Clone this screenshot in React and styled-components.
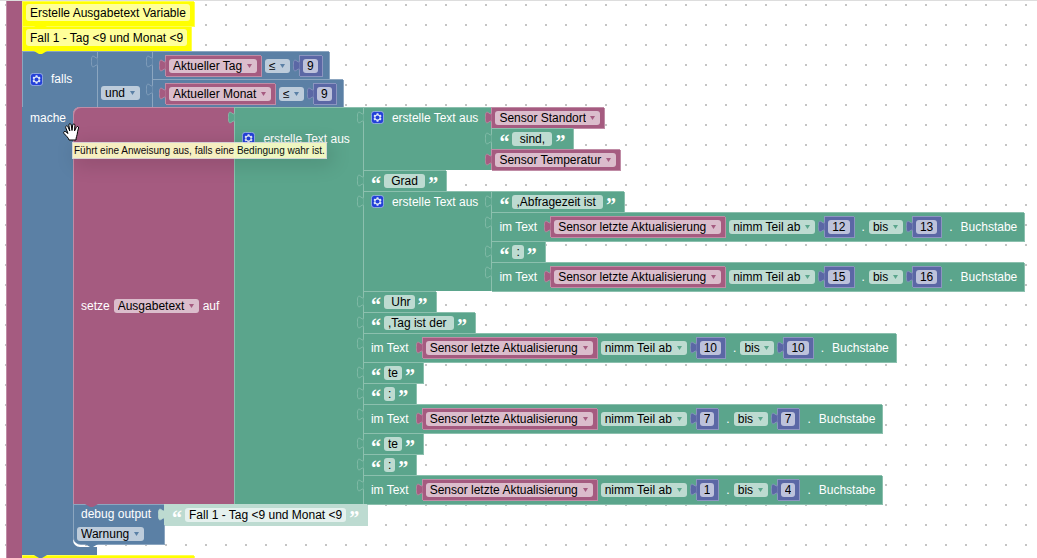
import React from "react";
import styled, { createGlobalStyle, css, ThemeProvider } from "styled-components";

const theme = {
  colors: {
    variable: { fill: "#a55b80", edge: "#c08ca6", field: "#dbbdcc" },
    text: { fill: "#5ba58c", edge: "#8cc0ae", field: "#bddbd1" },
    logic: { fill: "#5b80a5", edge: "#8ca6c0", field: "#bdccdb" },
    math: { fill: "#5b67a5", edge: "#8c95c0", field: "#bdc2db" },
    comment: { fill: "#ffff00", edge: "#ffff4d", field: "#ffff99" },
    shadow: { fill: "#bddbd1", edge: "#bddbd1", field: "#e5f1ee" },
  },
};

const GlobalStyle = createGlobalStyle`
  * {
    box-sizing: border-box;
  }
  body {
    margin: 0;
    background: #fff;
    font: 12px/14px "Liberation Sans", Arial, sans-serif;
  }
  input, select {
    font: inherit;
  }
`;

const tone = (part) => ({ theme, $tone }) => theme.colors[$tone][part];

const edges = css`
  background: ${tone("fill")};
  box-shadow: inset 1px 1px 0 ${tone("edge")}, 1px 1px 0 ${tone("edge")};
`;

const Workspace = styled.main`
  height: 100vh;
  overflow: hidden;
  padding-left: 6px;
  border-top: 1px solid #ddd;
  background-color: #fff;
  background-image: radial-gradient(circle, #c4c4c4 1px, transparent 1px);
  background-size: 20px 20px;
  background-position: -4px -6px;
`;

const Program = styled.div`
  display: flex;
  height: 100%;
`;

const ProgramArm = styled.div`
  flex: none;
  width: 16px;
  background: ${({ theme }) => theme.colors.variable.fill};
  box-shadow: inset 1px 0 0 ${({ theme }) => theme.colors.variable.edge};
`;

const Stack = styled.div`
  display: flex;
  flex-direction: column;
  align-items: flex-start;

  & > * {
    flex-shrink: 0;
  }
`;

const Label = styled.span`
  flex: none;
  margin-left: ${({ $flush }) => ($flush ? 0 : "4px")};
  color: #fff;
  white-space: nowrap;
`;

const TextField = styled.input`
  flex: none;
  field-sizing: content;
  height: 14px;
  padding: 0 4px;
  border: 0;
  border-radius: 3px;
  outline: 0;
  color: #000;
  background: ${tone("field")};
`;

const CommentField = styled(TextField)`
  height: 17px;
`;

const SelectWrap = styled.span`
  position: relative;
  flex: none;
  display: flex;
`;

const Select = styled.select`
  appearance: none;
  height: 14px;
  padding: 0 14px 0 4px;
  border: 0;
  border-radius: 3px;
  outline: 0;
  color: #000;
  background: ${tone("field")};
`;

const Arrow = styled.svg`
  position: absolute;
  top: 5px;
  right: 5px;
  width: 5px;
  height: 4px;
  fill: ${tone("fill")};
  pointer-events: none;
`;

const Quote = styled.span`
  flex: none;
  width: 10px;
  height: 20px;
  color: #fff;
  font: bold 20px/26px "Liberation Serif", serif;
`;

const GearBox = styled.button`
  flex: none;
  display: flex;
  width: 13px;
  height: 13px;
  margin-left: 4px;
  padding: 0;
  border: 0;
  background: none;
`;

const TabShape = styled.svg`
  position: absolute;
  top: 4px;
  left: -6px;
  width: 7px;
  height: 13px;
  fill: ${tone("fill")};
  stroke: ${tone("edge")};
`;

const NotchShape = styled.svg`
  position: absolute;
  z-index: 1;
  top: 100%;
  left: 12px;
  width: 13px;
  height: 3px;
  fill: ${tone("fill")};
`;

/* A block that sits inside the line of another block */
const InlineBlock = styled.div`
  position: relative;
  flex: none;
  display: flex;
  align-items: center;
  height: 21px;
  padding: 0 4px;
  margin-left: 5px;
  ${edges}

  &:first-of-type,
  ${Label} + & {
    margin-left: 9px;
  }
`;

/* A block with one line of fields, plugged into a row of its parent */
const LineBlock = styled.div`
  position: relative;
  display: flex;
  align-items: center;
  align-self: flex-start;
  gap: 4px;
  height: 29px;
  padding: 0 7px 0 4px;
  white-space: nowrap;
  ${edges}
`;

const CompareBlock = styled(LineBlock)`
  align-items: flex-start;
  height: 28px;
  padding-top: 4px;

  & > ${SelectWrap} {
    margin-top: 4px;
  }
`;

const StringBlock = styled(LineBlock)`
  gap: 3px;
  height: 21px;
  padding: 0 8px;
`;

const VariableBlock = styled(LineBlock)`
  height: 21px;
  padding: 0 4px;
`;

const CommentBlock = styled(LineBlock)`
  height: 25px;
  padding: 0 4px 2px;
`;

/* A block whose inputs hang on its right side */
const OuterBlock = styled.div`
  position: relative;
  display: flex;
  align-items: stretch;
`;

const Head = styled.div`
  position: relative;
  flex: none;
  display: flex;
  gap: 4px;
  align-items: ${({ $align }) => $align || "center"};
  padding: 0 13px 0 4px;
  white-space: nowrap;
  background: ${tone("fill")};
  box-shadow: inset 1px 1px 0 ${tone("edge")};
`;

const SetHead = styled(Head)`
  padding-right: 15px;
  border-top-left-radius: 7px;
`;

const FirstRow = styled.div`
  display: flex;
  align-items: center;
  gap: 4px;
  height: ${({ $rows }) => $rows * 21}px;
`;

const AndHead = styled(Head)`
  align-items: flex-end;
  padding: 0 12px 7px 4px;
`;

const IfHead = styled(Head)`
  width: 75px;
`;

const Rows = styled.div`
  display: flex;
  flex-direction: column;
  align-items: flex-start;
`;

const IfBody = styled.div`
  display: flex;
`;

const IfArm = styled.div`
  position: relative;
  flex: none;
  width: 51px;
  padding: 4px 0 0 4px;
  background: ${tone("fill")};
`;

const Slot = styled.div`
  position: relative;
  padding-bottom: 3px;
`;

const SlotCorner = styled.svg`
  position: absolute;
  left: 0;
  width: 7px;
  height: 7px;
  fill: ${tone("fill")};
  ${({ $top }) => ($top ? "top: 0;" : "bottom: 0;")}
`;

const IfFoot = styled.div`
  position: relative;
  width: 75px;
  height: 8px;
  background: ${tone("fill")};
`;

const DebugBlock = styled.div`
  position: relative;
  display: flex;
  align-items: flex-start;
`;

const DebugHead = styled.div`
  position: relative;
  display: flex;
  flex-direction: column;
  width: 91px;
  padding-left: 4px;
  border-bottom-left-radius: 7px;
  ${edges}
`;

const DebugLine = styled.div`
  display: flex;
  align-items: center;
  height: 20px;
`;

const Tooltip = styled.div`
  position: absolute;
  z-index: 3;
  top: 35px;
  left: 50px;
  padding: 1px;
  border: 1px solid #ddd;
  color: #000;
  background: #ffffc7;
  box-shadow: 4px 4px 20px 1px rgba(0, 0, 0, 0.15);
  font-size: 10px;
  line-height: 13px;
  white-space: nowrap;
  opacity: 0.9;
`;

const HandShape = styled.svg`
  position: absolute;
  z-index: 4;
  top: 16px;
  left: 41px;
  width: 17px;
  height: 18px;
`;

const Tab = ({ tone }) => (
  <TabShape $tone={tone} viewBox="0 0 8.5 16" preserveAspectRatio="none" aria-hidden="true">
    <path d="M8 .5c0 10-7.5-8-7.5 7.5S8 5.500 8 15.500" />
  </TabShape>
);

const Notch = ({ tone }) => (
  <NotchShape $tone={tone} viewBox="0 0 13 3" aria-hidden="true">
    <path d="M0 0L5 3H8L13 0Z" />
  </NotchShape>
);

const Dropdown = ({ tone, value, label }) => (
  <SelectWrap>
    <Select $tone={tone} aria-label={label} defaultValue={value}>
      <option>{value}</option>
    </Select>
    <Arrow $tone={tone} viewBox="0 0 5 4" aria-hidden="true">
      <path d="M0 0H5L2.500 4Z" />
    </Arrow>
  </SelectWrap>
);

const Gear = () => (
  <GearBox type="button" aria-label="Block bearbeiten">
    <svg width="13" height="13" viewBox="0 0 16 16" aria-hidden="true">
      <rect x=".5" y=".5" width="15" height="15" rx="3.500" fill="#2340d8" stroke="#a9bde6" />
      <path
        fill="#dfe8f8"
        d="m4.203,7.296 0,1.368 -0.92,0.677 -0.11,0.41 0.9,1.559 0.41,0.11 1.043,-0.457 1.187,0.683 0.127,1.134 0.3,0.3 1.8,0 0.3,-0.299 0.127,-1.138 1.185,-0.682 1.046,0.458 0.409,-0.11 0.9,-1.559 -0.11,-0.41 -0.92,-0.677 0,-1.366 0.92,-0.677 0.11,-0.41 -0.9,-1.559 -0.409,-0.109 -1.046,0.458 -1.185,-0.682 -0.127,-1.138 -0.3,-0.299 -1.8,0 -0.3,0.3 -0.126,1.135 -1.187,0.682 -1.043,-0.457 -0.41,0.11 -0.899,1.559z"
      />
      <circle cx="8" cy="8" r="2.500" fill="#2340d8" />
    </svg>
  </GearBox>
);

const Variable = ({ name, line }) => {
  const Wrapper = line ? VariableBlock : InlineBlock;
  return (
    <Wrapper $tone="variable">
      <Tab tone="variable" />
      <Dropdown tone="variable" value={name} label="Variable" />
    </Wrapper>
  );
};

const NumberValue = ({ value }) => (
  <InlineBlock $tone="math">
    <Tab tone="math" />
    <TextField $tone="math" aria-label="Zahl" defaultValue={value} />
  </InlineBlock>
);

const StringValue = ({ value, tone = "text" }) => (
  <StringBlock $tone={tone}>
    <Tab tone={tone} />
    <Quote>“</Quote>
    <TextField $tone={tone} aria-label="Text" defaultValue={value} />
    <Quote>”</Quote>
  </StringBlock>
);

const Compare = ({ name, value }) => (
  <CompareBlock $tone="logic">
    <Tab tone="logic" />
    <Variable name={name} />
    <Dropdown tone="logic" value="≤" label="Vergleich" />
    <NumberValue value={value} />
  </CompareBlock>
);

const Substring = ({ from, to }) => (
  <LineBlock $tone="text">
    <Tab tone="text" />
    <Label>im Text</Label>
    <Variable name="Sensor letzte Aktualisierung" />
    <Dropdown tone="text" value="nimm Teil ab" label="Von" />
    <NumberValue value={from} />
    <Label>.</Label>
    <Dropdown tone="text" value="bis" label="Bis" />
    <NumberValue value={to} />
    <Label>.</Label>
    <Label>Buchstabe</Label>
  </LineBlock>
);

const JoinText = ({ firstRows, children }) => (
  <OuterBlock>
    <Head $tone="text" $align="flex-start">
      <Tab tone="text" />
      <FirstRow $rows={firstRows}>
        <Gear />
        <Label>erstelle Text aus</Label>
      </FirstRow>
    </Head>
    <Rows>{children}</Rows>
  </OuterBlock>
);

const Comment = ({ value }) => (
  <CommentBlock $tone="comment">
    <CommentField $tone="comment" aria-label="Kommentar" defaultValue={value} />
    <Notch tone="comment" />
  </CommentBlock>
);

const Hand = () => (
  <HandShape viewBox="0 0 17 18" aria-hidden="true">
    <path
      fill="#fff"
      stroke="#000"
      strokeLinejoin="round"
      d="M6 17C5.500 14.500 3 13 .9 10.300 0 9 1.600 7.800 2.900 8.800L5 10.500 2.700 4.500C2.200 2.900 4.200 2.200 4.900 3.700L6.800 8 5.900 2.200C5.700.3 7.800.1 8.200 1.900L9 7.500 9.700 2C10 .4 12 .6 11.900 2.400L11.500 8 13.400 4.200C14.200 2.700 16 3.400 15.500 5L14.600 8.500C14.300 10.500 14.200 12 13.600 13.500 13.200 14.500 13 15.500 13 17z"
    />
  </HandShape>
);

const App = () => (
  <ThemeProvider theme={theme}>
    <GlobalStyle />
    <Workspace>
      <Program>
        <ProgramArm />
        <Stack>
          <Comment value="Erstelle Ausgabetext Variable" />
          <Comment value="Fall 1 - Tag <9 und Monat <9" />

          <OuterBlock>
            <IfHead $tone="logic">
              <Gear />
              <Label>falls</Label>
            </IfHead>
            <OuterBlock>
              <AndHead $tone="logic">
                <Tab tone="logic" />
                <Dropdown tone="logic" value="und" label="Verknüpfung" />
              </AndHead>
              <Rows>
                <Compare name="Aktueller Tag" value="9" />
                <Compare name="Aktueller Monat" value="9" />
              </Rows>
            </OuterBlock>
          </OuterBlock>

          <IfBody>
            <IfArm $tone="logic">
              <Label>mache</Label>
              <Hand />
              <Tooltip role="tooltip">
                Führt eine Anweisung aus, falls eine Bedingung wahr ist.
              </Tooltip>
            </IfArm>
            <Slot>
              <SlotCorner $tone="logic" $top viewBox="0 0 7 7" aria-hidden="true">
                <path d="M0 7A7 7 0 0 1 7 0H0Z" />
              </SlotCorner>
              <OuterBlock>
                <SetHead $tone="variable">
                  <Label>setze</Label>
                  <Dropdown tone="variable" value="Ausgabetext" label="Variable" />
                  <Label $flush>auf</Label>
                </SetHead>
                <JoinText firstRows={3}>
                  <JoinText firstRows={1}>
                    <Variable line name="Sensor Standort" />
                    <StringValue value=" sind, " />
                    <Variable line name="Sensor Temperatur" />
                  </JoinText>
                  <StringValue value=" Grad " />
                  <JoinText firstRows={1}>
                    <StringValue value=",Abfragezeit ist " />
                    <Substring from="12" to="13" />
                    <StringValue value=":" />
                    <Substring from="15" to="16" />
                  </JoinText>
                  <StringValue value=" Uhr" />
                  <StringValue value=",Tag ist der " />
                  <Substring from="10" to="10" />
                  <StringValue value="te" />
                  <StringValue value=":" />
                  <Substring from="7" to="7" />
                  <StringValue value="te" />
                  <StringValue value=":" />
                  <Substring from="1" to="4" />
                </JoinText>
                <Notch tone="variable" />
              </OuterBlock>
              <SlotCorner $tone="logic" viewBox="0 0 7 7" aria-hidden="true">
                <path d="M0 0A7 7 0 0 0 7 7H0Z" />
              </SlotCorner>
              <DebugBlock>
                <DebugHead $tone="logic">
                  <DebugLine>
                    <Label>debug output</Label>
                  </DebugLine>
                  <DebugLine>
                    <Dropdown tone="logic" value="Warnung" label="Stufe" />
                  </DebugLine>
                  <Notch tone="logic" />
                </DebugHead>
                <StringValue tone="shadow" value="Fall 1 - Tag <9 und Monat <9" />
              </DebugBlock>
            </Slot>
          </IfBody>
          <IfFoot $tone="logic">
            <Notch tone="logic" />
          </IfFoot>
          <Comment value="Erstelle Ausgabetext Variable" />
        </Stack>
      </Program>
    </Workspace>
  </ThemeProvider>
);

export default App;
